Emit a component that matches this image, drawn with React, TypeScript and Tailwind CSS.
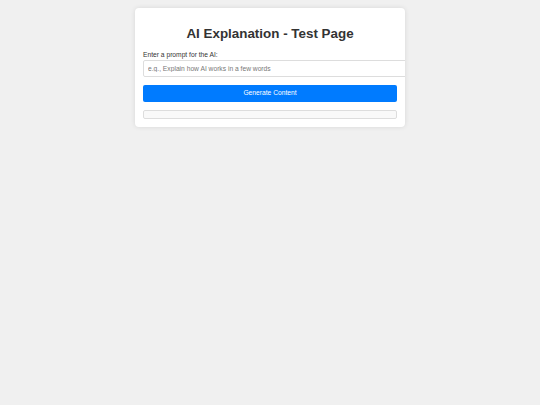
import { useState } from "react";

const App = () => {
  const [prompt, setPrompt] = useState("");

  return (
    <div className="min-h-screen bg-[#f0f0f0] pt-[8px] font-['Liberation_Sans',Arial,sans-serif]">
      <div className="mx-auto w-[270px] overflow-hidden rounded-[4px] bg-white px-[8px] pt-[18px] pb-[8px] shadow-[0_0_5px_rgba(0,0,0,0.1)]">
        <h1 className="text-center text-[13.4px] leading-[15px] font-bold text-[#333]">AI Explanation - Test Page</h1>
        <label className="mt-[9.5px] block text-[6.7px] leading-[8px] text-[#333]">Enter a prompt for the AI:</label>
        <input
          className="mt-[1px] block h-[17px] w-[264px] rounded-[2px] border border-[#ddd] px-[4px] text-[6.7px] text-[#333] outline-none placeholder:text-[#777]"
          placeholder="e.g., Explain how AI works in a few words"
          value={prompt}
          onChange={(e) => setPrompt(e.currentTarget.value)}
        />
        <button className="mt-[8px] block h-[17px] w-full rounded-[2px] bg-[#007bff] text-[6.7px] text-white">
          Generate Content
        </button>
        <div className="mt-[8px] h-[9px] rounded-[2px] border border-[#ddd] bg-[#f9f9f9]" />
      </div>
    </div>
  );
};

export default App;
